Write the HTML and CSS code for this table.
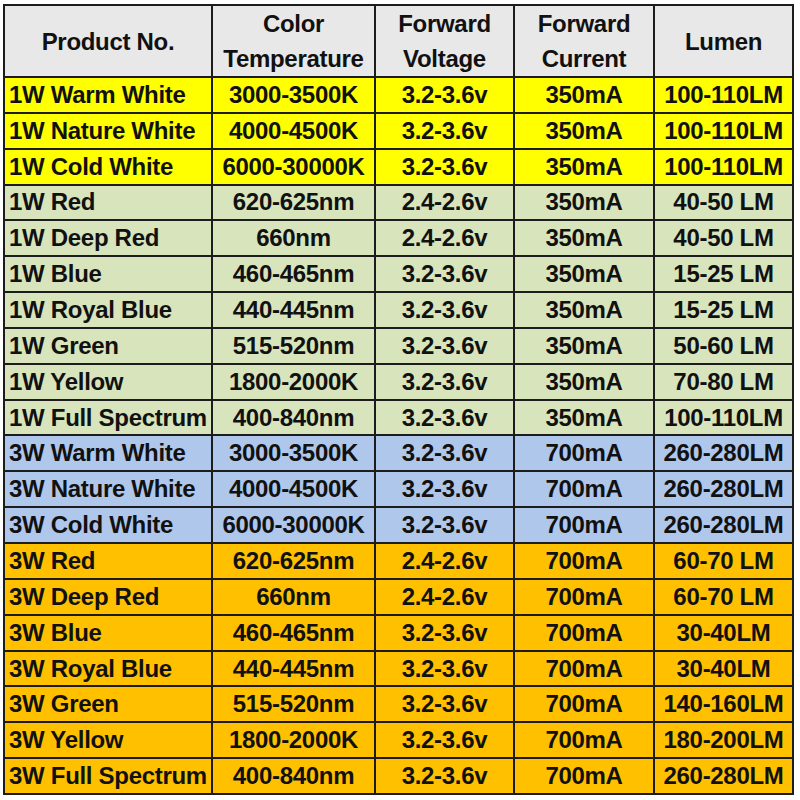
FILE: index.html
```html
<!DOCTYPE html>
<html>
<head>
<meta charset="utf-8">
<link rel="stylesheet" href="styles.css">
</head>
<body>
<div class="sheet">
  <div class="grid">
    <div class="cell head">Product No.</div>
    <div class="cell head">Color<br>Temperature</div>
    <div class="cell head">Forward<br>Voltage</div>
    <div class="cell head">Forward<br>Current</div>
    <div class="cell head">Lumen</div>

    <div class="cell name y">1W Warm White</div><div class="cell y">3000-3500K</div><div class="cell y">3.2-3.6v</div><div class="cell y">350mA</div><div class="cell y">100-110LM</div>
    <div class="cell name y">1W Nature White</div><div class="cell y">4000-4500K</div><div class="cell y">3.2-3.6v</div><div class="cell y">350mA</div><div class="cell y">100-110LM</div>
    <div class="cell name y">1W Cold White</div><div class="cell y">6000-30000K</div><div class="cell y">3.2-3.6v</div><div class="cell y">350mA</div><div class="cell y">100-110LM</div>

    <div class="cell name g">1W Red</div><div class="cell g">620-625nm</div><div class="cell g">2.4-2.6v</div><div class="cell g">350mA</div><div class="cell g">40-50 LM</div>
    <div class="cell name g">1W Deep Red</div><div class="cell g">660nm</div><div class="cell g">2.4-2.6v</div><div class="cell g">350mA</div><div class="cell g">40-50 LM</div>
    <div class="cell name g">1W Blue</div><div class="cell g">460-465nm</div><div class="cell g">3.2-3.6v</div><div class="cell g">350mA</div><div class="cell g">15-25 LM</div>
    <div class="cell name g">1W Royal Blue</div><div class="cell g">440-445nm</div><div class="cell g">3.2-3.6v</div><div class="cell g">350mA</div><div class="cell g">15-25 LM</div>
    <div class="cell name g">1W Green</div><div class="cell g">515-520nm</div><div class="cell g">3.2-3.6v</div><div class="cell g">350mA</div><div class="cell g">50-60 LM</div>
    <div class="cell name g">1W Yellow</div><div class="cell g">1800-2000K</div><div class="cell g">3.2-3.6v</div><div class="cell g">350mA</div><div class="cell g">70-80 LM</div>
    <div class="cell name g">1W Full Spectrum</div><div class="cell g">400-840nm</div><div class="cell g">3.2-3.6v</div><div class="cell g">350mA</div><div class="cell g">100-110LM</div>

    <div class="cell name b">3W Warm White</div><div class="cell b">3000-3500K</div><div class="cell b">3.2-3.6v</div><div class="cell b">700mA</div><div class="cell b">260-280LM</div>
    <div class="cell name b">3W Nature White</div><div class="cell b">4000-4500K</div><div class="cell b">3.2-3.6v</div><div class="cell b">700mA</div><div class="cell b">260-280LM</div>
    <div class="cell name b">3W Cold White</div><div class="cell b">6000-30000K</div><div class="cell b">3.2-3.6v</div><div class="cell b">700mA</div><div class="cell b">260-280LM</div>

    <div class="cell name o">3W Red</div><div class="cell o">620-625nm</div><div class="cell o">2.4-2.6v</div><div class="cell o">700mA</div><div class="cell o">60-70 LM</div>
    <div class="cell name o">3W Deep Red</div><div class="cell o">660nm</div><div class="cell o">2.4-2.6v</div><div class="cell o">700mA</div><div class="cell o">60-70 LM</div>
    <div class="cell name o">3W Blue</div><div class="cell o">460-465nm</div><div class="cell o">3.2-3.6v</div><div class="cell o">700mA</div><div class="cell o">30-40LM</div>
    <div class="cell name o">3W Royal Blue</div><div class="cell o">440-445nm</div><div class="cell o">3.2-3.6v</div><div class="cell o">700mA</div><div class="cell o">30-40LM</div>
    <div class="cell name o">3W Green</div><div class="cell o">515-520nm</div><div class="cell o">3.2-3.6v</div><div class="cell o">700mA</div><div class="cell o">140-160LM</div>
    <div class="cell name o">3W Yellow</div><div class="cell o">1800-2000K</div><div class="cell o">3.2-3.6v</div><div class="cell o">700mA</div><div class="cell o">180-200LM</div>
    <div class="cell name o">3W Full Spectrum</div><div class="cell o">400-840nm</div><div class="cell o">3.2-3.6v</div><div class="cell o">700mA</div><div class="cell o">260-280LM</div>
  </div>
</div>
</body>
</html>
```

FILE: styles.css
```css
html, body {
  margin: 0;
  padding: 0;
  background: #ffffff;
}

.sheet {
  width: 800px;
  height: 800px;
  padding: 4px 0 0 3px;
  box-sizing: border-box;
}

.grid {
  display: grid;
  grid-template-columns: 206px 161px 137px 138px 137px;
  grid-template-rows: 70px repeat(20, 1fr);
  gap: 2px;
  padding: 2px;
  width: 791px;
  height: 791px;
  box-sizing: border-box;
  background: #1c1c1c;
  font-family: "Liberation Sans", Arial, sans-serif;
  font-weight: bold;
  font-size: 24px;
  letter-spacing: -0.3px;
  color: #111111;
}

.cell {
  display: flex;
  align-items: center;
  justify-content: center;
  text-align: center;
  white-space: nowrap;
  overflow: hidden;
}

.head {
  background: #e8e8e8;
  line-height: 35px;
}

.name {
  justify-content: flex-start;
  padding-left: 4px;
}

.y { background: #ffff00; }
.g { background: #d8e4bc; }
.b { background: #afc7ea; }
.o { background: #ffc000; }
```
